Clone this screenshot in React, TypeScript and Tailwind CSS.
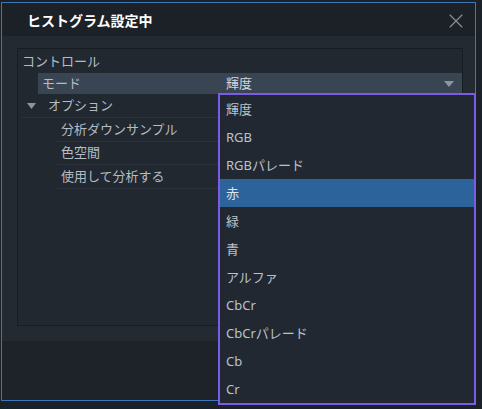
import React from 'react';
import { X } from 'lucide-react';

const font = { fontFamily: '"Noto Sans", "Noto Sans CJK JP", sans-serif' };

const options = ['輝度', 'RGB', 'RGBパレード', '赤', '緑', '青', 'アルファ', 'CbCr', 'CbCrパレード', 'Cb', 'Cr'];

const subRows = ['分析ダウンサンプル', '色空間', '使用して分析する'];

const App: React.FC = () => {
  return (
    <div className="relative w-[482px] h-[409px] bg-[#1b2129] overflow-hidden" style={font}>
      {/* Window */}
      <div className="ml-[1px] mt-[2px] w-[475px] h-[399px] border border-[#3a78b8] bg-[#232a32] flex flex-col">
        {/* Title bar */}
        <div className="h-[33px] shrink-0 bg-[#1c2127] flex items-center justify-between pl-[25px] pr-[7px]">
          <span className="text-[14px] font-bold text-white leading-none pt-[3px]">ヒストグラム設定中</span>
          <X size={24} strokeWidth={1.1} className="text-[#8a939c] mt-[3px]" />
        </div>

        {/* Body */}
        <div className="flex-1 flex flex-col">
          <div className="mt-[12px] ml-[15px] mr-[12px] h-[278px] border border-[#181d23] bg-[#222830] flex flex-col text-[13px] text-[#b4bcc5]">
            <div className="h-[24px] flex items-center pl-[4px] pt-[1px]">コントロール</div>
            <div className="ml-[20px] h-[21px] bg-[#3a4554] flex items-center">
              <span className="w-[184px] pl-[4px]">モード</span>
              <span className="flex-1 pl-[4px] text-[#d2d8de]">輝度</span>
              <svg width="10" height="6" viewBox="0 0 10 6" className="mr-[8px]">
                <path d="M0 0 L10 0 L5 6 Z" fill="#8c96a0" />
              </svg>
            </div>
            <div className="ml-[4px] h-[24px] flex items-center border-b border-[#2c333c]">
              <svg width="9" height="6" viewBox="0 0 9 6" className="ml-[5px] mr-[12px]">
                <path d="M0 0 L9 0 L4.5 6 Z" fill="#8c96a0" />
              </svg>
              <span>オプション</span>
            </div>
            {subRows.map((r) => (
              <div key={r} className="ml-[39px] h-[23.5px] flex items-center pl-[4px] border-b border-[#2c333c]">
                {r}
              </div>
            ))}
          </div>
          <div className="mt-[15px] flex-1 bg-[#1e232a]" />
        </div>
      </div>

      {/* Dropdown list */}
      <div className="absolute left-[218px] top-[93px] w-[258px] h-[312px] border-2 border-[#7a5ce6] bg-[#222831] flex flex-col">
        {options.map((o) => (
          <div
            key={o}
            className={`h-[28px] shrink-0 flex items-center pl-[6px] pt-[1px] text-[13px] ${
              o === '赤' ? 'bg-[#2c639a] text-[#dfe5eb]' : 'text-[#b9c3cd]'
            }`}
          >
            {o}
          </div>
        ))}
      </div>
    </div>
  );
};

export default App;
